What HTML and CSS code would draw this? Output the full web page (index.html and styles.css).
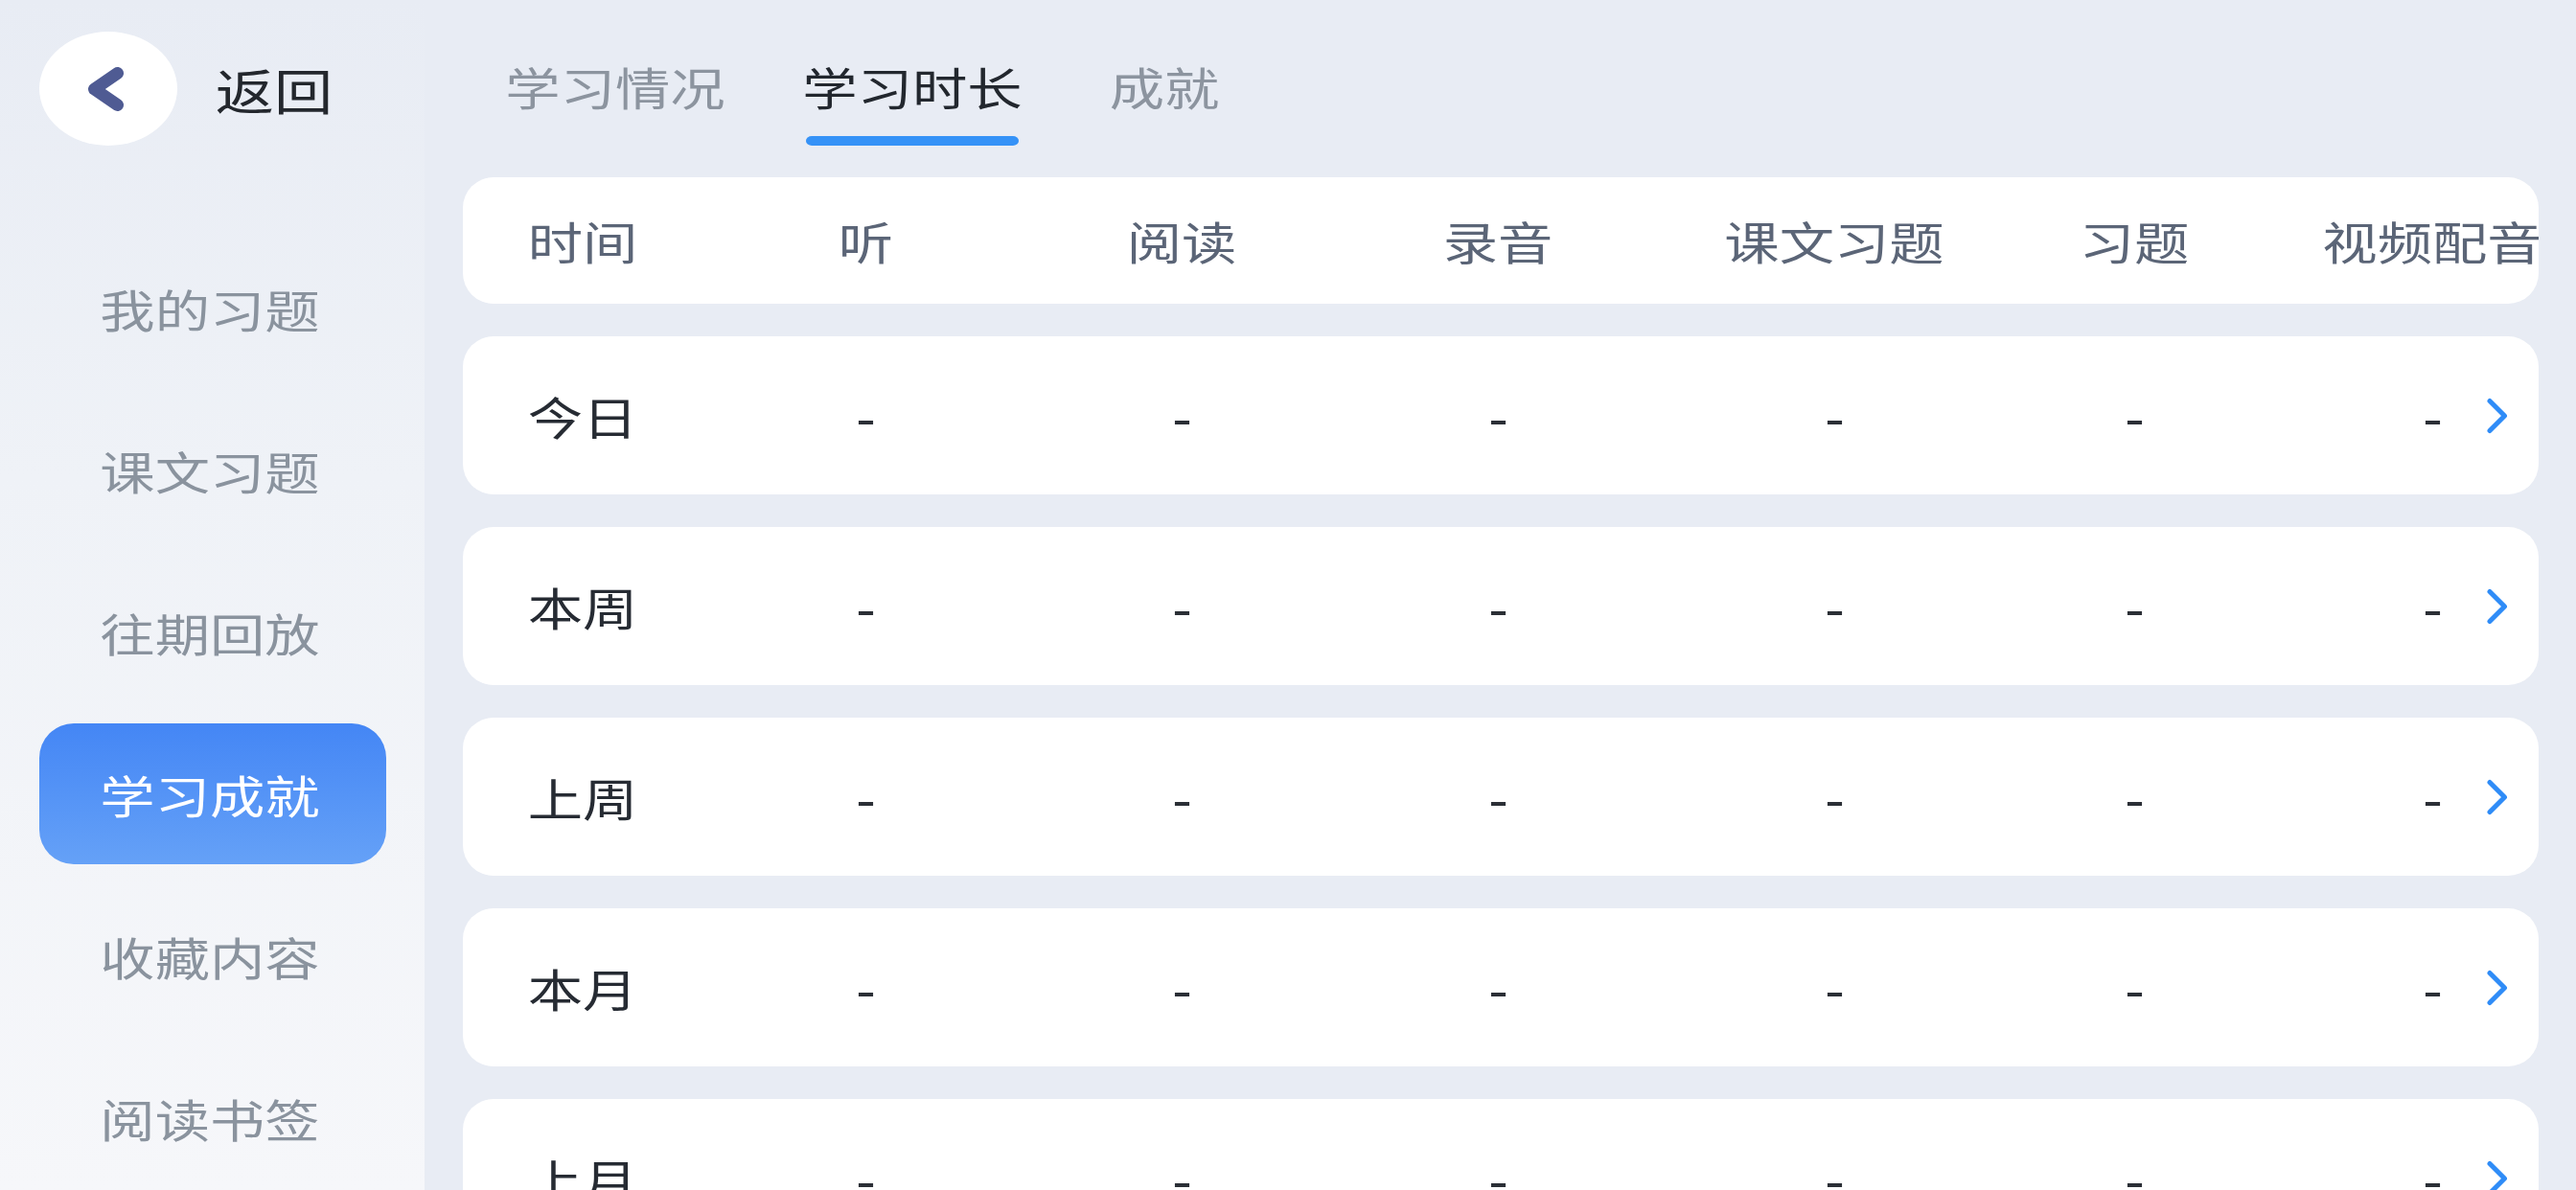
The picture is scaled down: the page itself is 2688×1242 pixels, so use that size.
FILE: index.html
```html
<!DOCTYPE html>
<html lang="zh-CN">
<head>
<meta charset="utf-8">
<title>学习时长</title>
<link rel="stylesheet" href="styles.css">
</head>
<body>
<div class="app">
  <aside class="sidebar">
    <div class="back">
      <div class="back-btn">
        <svg viewBox="0 0 40 50" aria-hidden="true"><polyline points="33.5,8.5 9.5,25 33.5,41.5" fill="none" stroke="#4f5b93" stroke-width="13" stroke-linecap="round" stroke-linejoin="round"/></svg>
      </div>
      <span class="back-label">返回</span>
    </div>
    <nav class="menu">
      <div class="menu-item"><span class="wide">我的习题</span></div>
      <div class="menu-item"><span class="wide">课文习题</span></div>
      <div class="menu-item"><span class="wide">往期回放</span></div>
      <div class="menu-item active"><span class="wide">学习成就</span></div>
      <div class="menu-item"><span class="wide">收藏内容</span></div>
      <div class="menu-item"><span class="wide">阅读书签</span></div>
    </nav>
  </aside>
  <main class="main">
    <div class="tabs">
      <div class="tab">学习情况</div>
      <div class="tab active">学习时长</div>
      <div class="tab">成就</div>
    </div>
    <div class="card head">
      <div class="grid">
        <span class="wide">时间</span>
        <span class="wide">听</span>
        <span class="wide">阅读</span>
        <span class="wide">录音</span>
        <span class="wide">课文习题</span>
        <span class="wide">习题</span>
        <span class="wide">视频配音</span>
      </div>
    </div>
    <div class="card row">
      <div class="grid">
        <span class="wide">今日</span><span class="wide dash">-</span><span class="wide dash">-</span><span class="wide dash">-</span><span class="wide dash">-</span><span class="wide dash">-</span><span class="wide dash">-</span>
      </div>
      <svg class="more" viewBox="0 0 24 38" aria-hidden="true"><polyline points="4,3.5 19.5,19 4,34.5" fill="none" stroke="#2f8cf7" stroke-width="5" stroke-linecap="round" stroke-linejoin="round"/></svg>
    </div>
    <div class="card row">
      <div class="grid">
        <span class="wide">本周</span><span class="wide dash">-</span><span class="wide dash">-</span><span class="wide dash">-</span><span class="wide dash">-</span><span class="wide dash">-</span><span class="wide dash">-</span>
      </div>
      <svg class="more" viewBox="0 0 24 38" aria-hidden="true"><polyline points="4,3.5 19.5,19 4,34.5" fill="none" stroke="#2f8cf7" stroke-width="5" stroke-linecap="round" stroke-linejoin="round"/></svg>
    </div>
    <div class="card row">
      <div class="grid">
        <span class="wide">上周</span><span class="wide dash">-</span><span class="wide dash">-</span><span class="wide dash">-</span><span class="wide dash">-</span><span class="wide dash">-</span><span class="wide dash">-</span>
      </div>
      <svg class="more" viewBox="0 0 24 38" aria-hidden="true"><polyline points="4,3.5 19.5,19 4,34.5" fill="none" stroke="#2f8cf7" stroke-width="5" stroke-linecap="round" stroke-linejoin="round"/></svg>
    </div>
    <div class="card row">
      <div class="grid">
        <span class="wide">本月</span><span class="wide dash">-</span><span class="wide dash">-</span><span class="wide dash">-</span><span class="wide dash">-</span><span class="wide dash">-</span><span class="wide dash">-</span>
      </div>
      <svg class="more" viewBox="0 0 24 38" aria-hidden="true"><polyline points="4,3.5 19.5,19 4,34.5" fill="none" stroke="#2f8cf7" stroke-width="5" stroke-linecap="round" stroke-linejoin="round"/></svg>
    </div>
    <div class="card row">
      <div class="grid">
        <span class="wide">上月</span><span class="wide dash">-</span><span class="wide dash">-</span><span class="wide dash">-</span><span class="wide dash">-</span><span class="wide dash">-</span><span class="wide dash">-</span>
      </div>
      <svg class="more" viewBox="0 0 24 38" aria-hidden="true"><polyline points="4,3.5 19.5,19 4,34.5" fill="none" stroke="#2f8cf7" stroke-width="5" stroke-linecap="round" stroke-linejoin="round"/></svg>
    </div>
  </main>
</div>
</body>
</html>
```
FILE: styles.css
```css
html, body {
  margin: 0;
  padding: 0;
  width: 2688px;
  height: 1242px;
  overflow: hidden;
  background: #e8ecf4;
  font-family: "Noto Sans CJK SC", "Noto Sans", sans-serif;
}

.app {
  display: flex;
  width: 2688px;
  height: 1242px;
}

/* horizontally widened glyphs, as in the reference */
.wide {
  display: inline-block;
  transform: scaleX(1.22);
  transform-origin: 50% 50%;
}

/* Sidebar */
.sidebar {
  width: 443px;
  flex: none;
  box-sizing: border-box;
  padding: 33px 0 0 41px;
  background: linear-gradient(180deg, #e8ecf4 0%, #eff2f7 40%, #f6f7fa 100%);
}

.back {
  display: flex;
  align-items: center;
  height: 119px;
}

.back-btn {
  width: 144px;
  height: 119px;
  border-radius: 50%;
  background: #ffffff;
  display: flex;
  align-items: center;
  justify-content: center;
}

.back-btn svg {
  width: 40px;
  height: 50px;
  margin-right: 9px;
}

.back-label {
  display: inline-block;
  margin-left: 50px;
  font-size: 51px;
  line-height: 70px;
  color: #23272d;
  transform: scaleX(1.2);
  transform-origin: 50% 50%;
}

.menu {
  margin-top: 96px;
  display: flex;
  flex-direction: column;
  gap: 22px;
}

.menu-item {
  width: 362px;
  height: 147px;
  border-radius: 36px;
  display: flex;
  align-items: center;
  justify-content: center;
  padding-right: 7px;
  box-sizing: border-box;
  font-size: 47px;
  color: #8a939e;
}

.menu-item.active {
  background: linear-gradient(180deg, #4486f5 0%, #65a1f7 100%);
  color: #ffffff;
}

/* Main */
.main {
  flex: 1;
  box-sizing: border-box;
  padding: 57px 39px 0 40px;
  min-width: 0;
}

.tabs {
  display: flex;
  gap: 122px;
  margin-left: 65px;
  margin-bottom: 33px;
}

.tab {
  position: relative;
  font-size: 47px;
  line-height: 66px;
  padding-bottom: 29px;
  color: #8c949f;
  transform: scaleX(1.22);
  transform-origin: 50% 50%;
}

.tab.active {
  color: #22272e;
}

.tab.active::after {
  content: "";
  position: absolute;
  left: 3px;
  right: 3px;
  bottom: 0;
  height: 10px;
  border-radius: 5px;
  background: #3592f7;
}

.card {
  position: relative;
  background: #ffffff;
  border-radius: 32px;
  overflow: hidden;
  margin-bottom: 34px;
}

.head {
  height: 132px;
  color: #5b6577;
}

.row {
  height: 165px;
  color: #262b33;
}

.grid {
  display: grid;
  grid-template-columns: 250px 340px 320px 340px 362px 264px 358px;
  height: 100%;
  align-items: center;
  justify-items: center;
  font-size: 47px;
  line-height: 66px;
  white-space: nowrap;
}

.dash {
  color: #2b2f36;
  font-weight: 500;
}

.more {
  position: absolute;
  right: 31px;
  top: 50%;
  width: 24px;
  height: 38px;
  margin-top: -19px;
}
```
